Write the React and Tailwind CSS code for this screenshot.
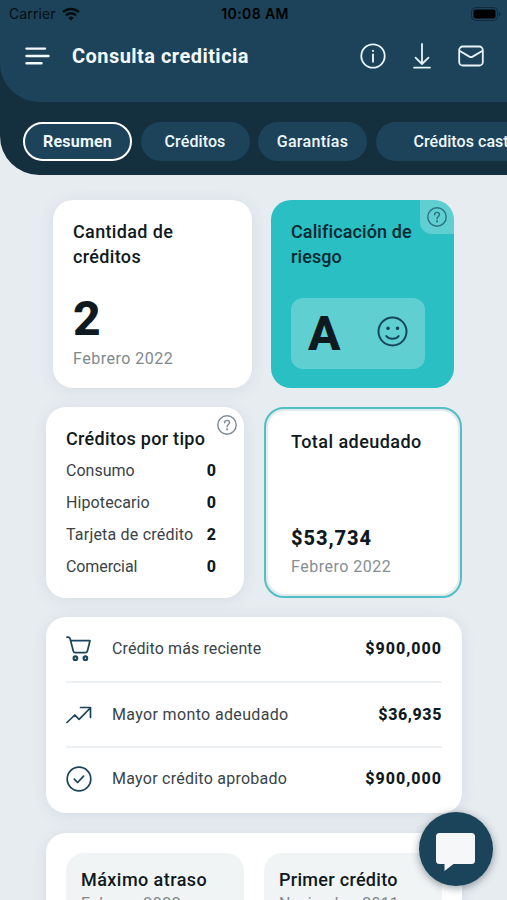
import React from 'react';

const types = [
  { label: 'Consumo', value: '0', tracking: 'tracking-[0px]' },
  { label: 'Hipotecario', value: '0', tracking: 'tracking-[0.1px]' },
  { label: 'Tarjeta de crédito', value: '2', tracking: 'tracking-[0.2px]' },
  { label: 'Comercial', value: '0', tracking: 'tracking-[-0.1px]' },
];

const CartIcon = () => (
  <svg width="26" height="26" viewBox="0 0 26 26" fill="none" stroke="#1b4359" strokeWidth="1.7" strokeLinecap="round" strokeLinejoin="round">
    <path d="M1 1.2h1.2c1 0 1.600.6 1.900 1.500L7.300 15c.3 1.100.9 1.600 1.900 1.600h10.200c1 0 1.700-.5 2-1.600l2.600-10.300H4.800" />
    <circle cx="9.400" cy="22.200" r="1.800" strokeWidth="2.100" />
    <circle cx="19.400" cy="22.200" r="1.800" strokeWidth="2.100" />
  </svg>
);

const TrendIcon = () => (
  <svg width="26" height="18" viewBox="0 0 26 18" fill="none" stroke="#1b4359" strokeWidth="1.7" strokeLinecap="round" strokeLinejoin="round">
    <path d="M1 16.500l7.800-7.500 4.300 4.300L24.300 2M14.500 1.500h10v10" />
  </svg>
);

const CheckIcon = () => (
  <svg width="26" height="26" viewBox="0 0 26 26" fill="none" stroke="#1b4359" strokeWidth="1.7" strokeLinecap="round" strokeLinejoin="round">
    <circle cx="13" cy="13" r="11.8" />
    <path d="M8.300 13.200l3.300 3.300 6-6.300" />
  </svg>
);

const records = [
  {
    icon: <CartIcon />,
    label: 'Crédito más reciente',
    value: '$900,000',
    row: 'h-16',
    tracking: 'tracking-[0.1px]',
    valueTracking: 'tracking-[1px]',
  },
  {
    icon: <TrendIcon />,
    label: 'Mayor monto adeudado',
    value: '$36,935',
    row: 'h-[65px] border-t-2 border-[#edf1f3]',
    tracking: 'tracking-[0.35px]',
    valueTracking: 'tracking-[0.6px]',
  },
  {
    icon: <CheckIcon />,
    label: 'Mayor crédito aprobado',
    value: '$900,000',
    row: 'h-[64px] border-t-2 border-[#edf1f3]',
    tracking: 'tracking-[0.25px]',
    valueTracking: 'tracking-[1px]',
  },
];

const HelpIcon = ({ color }) => (
  <svg width="20" height="20" viewBox="0 0 20 20" fill="none" stroke={color} strokeWidth="1.4" strokeLinecap="round">
    <circle cx="10" cy="10" r="9.2" />
    <path d="M7.600 7.800c0-1.400 1-2.400 2.400-2.400s2.500.9 2.500 2.200c0 1.800-2.400 2-2.400 3.900v.3" />
    <circle cx="10.1" cy="14.4" r=".4" fill={color} />
  </svg>
);

const StatusBar = () => (
  <div className="flex h-[27px] items-center justify-between pr-[6px] pl-[9px] font-[Inter,sans-serif] text-[14px] text-black">
    <div className="flex w-[120px] items-center gap-[6px] opacity-80">
      <span className="tracking-[0.1px]">Carrier</span>
      <svg width="18" height="14" viewBox="0 0 18 14" fill="none" stroke="#000" strokeWidth="2.5">
        <path d="M1 5.200a11.500 11.500 0 0 1 16 0M4 8.300a7.200 7.200 0 0 1 10 0" />
        <path d="M9 13.600L6.300 10.900a3.900 3.900 0 0 1 5.400 0z" fill="#000" stroke="none" />
      </svg>
    </div>
    <span className="font-semibold tracking-[0.4px]">10:08 AM</span>
    <div className="flex w-[120px] justify-end">
      <svg width="30" height="14" viewBox="0 0 30 14">
        <rect x=".5" y=".5" width="26" height="13" rx="4" fill="none" stroke="#000" strokeOpacity=".35" />
        <rect x="2.5" y="2.5" width="22" height="9" rx="2" fill="#000" />
        <path d="M28 5v4c1-.3 1.500-1 1.500-2S29 5.300 28 5z" fill="#000" fillOpacity=".4" />
      </svg>
    </div>
  </div>
);

const Header = () => (
  <header className="h-[175px] rounded-bl-[39px] bg-[#14303f]">
    <div className="h-[102px] rounded-bl-[39px] bg-[#1c435a]">
      <StatusBar />
      <div className="mt-px flex h-14 items-center pr-[23px] pl-[25px]">
        <svg width="26" height="20" viewBox="0 0 26 20" stroke="#f3f9fd" strokeWidth="2.4" strokeLinecap="round">
          <path d="M1.500 2.600h18.500M1.500 10h22M1.500 17.300h15" />
        </svg>
        <h1 className="ml-[21px] text-[20px] leading-7 font-bold tracking-[0.46px] text-[#f3f9fd]">Consulta crediticia</h1>
        <div className="ml-auto flex items-center">
          <svg width="26" height="26" viewBox="0 0 26 26" fill="none" stroke="#e8f4fa" strokeWidth="1.8" strokeLinecap="round">
            <circle cx="13" cy="13" r="11.7" />
            <path d="M13 11.500v7.200M13 7.600v.4" strokeWidth="1.9" />
          </svg>
          <svg className="ml-[26px]" width="20" height="26" viewBox="0 0 20 26" fill="none" stroke="#e8f4fa" strokeWidth="1.8" strokeLinecap="round" strokeLinejoin="round">
            <path d="M10 1v20M3.500 14.700L10 21l6.500-6.300M2 24.600h16" />
          </svg>
          <svg className="ml-[26px]" width="26" height="22" viewBox="0 0 26 22" fill="none" stroke="#e8f4fa" strokeWidth="1.8" strokeLinecap="round" strokeLinejoin="round">
            <rect x="1.2" y="1.5" width="23.6" height="19" rx="3.5" />
            <path d="M1.800 6l9.600 5.600c1.100.6 2.100.6 3.200 0L24.200 6" />
          </svg>
        </div>
      </div>
    </div>
    <nav className="mt-5 flex gap-[8.5px] overflow-hidden pl-[23px] text-[16px] font-medium text-[#eff8fc]">
      <span className="flex h-[39px] w-[109px] shrink-0 items-center justify-center rounded-full border-2 border-white bg-[#1c435a] font-bold tracking-[0.2px]">Resumen</span>
      <span className="flex h-[39px] w-[109px] shrink-0 items-center justify-center rounded-full bg-[#1c435a] tracking-[0.1px]">Créditos</span>
      <span className="flex h-[39px] w-[109px] shrink-0 items-center justify-center rounded-full bg-[#1c435a] tracking-[0.3px]">Garantías</span>
      <span className="flex h-[39px] w-[220px] shrink-0 items-center rounded-l-full bg-[#1c435a] pl-[38px] tracking-[0.05px] whitespace-nowrap">Créditos castigados</span>
    </nav>
  </header>
);

const App = () => {
  return (
    <div className="relative h-[900px] w-[507px] overflow-hidden bg-[#e7ecf1] font-[Roboto,sans-serif] text-[#0f1a20]">
      <Header />

      <main className="mt-[25px] ml-[46px] w-[416px]">
        <div className="flex justify-between pr-2 pl-[7px]">
          <section className="h-[188px] w-[199px] rounded-[20px] bg-white px-5 pt-[19px] shadow-[0_2px_16px_rgba(40,80,100,0.09)]">
            <h2 className="text-[18px] leading-[25px] font-medium tracking-[0.35px]">Cantidad de<br />créditos</h2>
            <p className="mt-[26px] text-[48px] leading-[48px] font-extrabold">2</p>
            <p className="mt-1 text-[16px] leading-6 tracking-[0.5px] text-[#7d898d]">Febrero 2022</p>
          </section>
          <section className="relative h-[188px] w-[183px] overflow-hidden rounded-[20px] bg-[#2abfc3] px-5 pt-[19px]">
            <span className="absolute top-0 right-0 flex h-[34px] w-[34px] items-center justify-center rounded-bl-[12px] bg-white/25">
              <HelpIcon color="#2b7183" />
            </span>
            <h2 className="text-[18px] leading-[25px] font-medium tracking-[0.1px] whitespace-nowrap text-[#082832]">Calificación de<br />riesgo</h2>
            <div className="mt-[29px] flex h-[71px] w-[134px] items-center justify-between rounded-[12px] bg-white/25 pr-[17px] pl-[17px]">
              <span className="text-[48px] leading-[48px] font-extrabold">A</span>
              <svg className="-mt-1" width="31" height="31" viewBox="0 0 31 31" fill="none" stroke="#17465a" strokeWidth="2" strokeLinecap="round">
                <circle cx="15.5" cy="15.5" r="14" />
                <path d="M9.300 20c2.800 3.700 9.600 3.700 12.400 0" />
                <circle cx="11" cy="12.2" r="1.2" fill="#17465a" strokeWidth="1.2" />
                <circle cx="20.5" cy="12.2" r="1.2" fill="#17465a" strokeWidth="1.2" />
              </svg>
            </div>
          </section>
        </div>

        <div className="mt-[19px] flex justify-between">
          <section className="relative h-[191px] w-[198px] rounded-[20px] bg-white pt-[19px] pr-7 pl-5 shadow-[0_2px_16px_rgba(40,80,100,0.09)]">
            <span className="absolute top-2 right-[7px]">
              <HelpIcon color="#7b8b97" />
            </span>
            <h2 className="text-[18px] leading-[25px] font-medium tracking-[0.3px] whitespace-nowrap">Créditos por tipo</h2>
            <ul className="mt-1 text-[16px]">
              {types.map((t) => (
                <li key={t.label} className="flex h-8 items-center justify-between whitespace-nowrap">
                  <span className={`text-[#3a4347] ${t.tracking}`}>{t.label}</span>
                  <span className="font-extrabold">{t.value}</span>
                </li>
              ))}
            </ul>
          </section>
          <section className="h-[191px] w-[198px] rounded-[20px] border-2 border-[#52bfc4] bg-[#e3ebef] p-[2px]">
            <div className="h-full rounded-[17px] bg-white pt-[18px] pl-[23px]">
              <h2 className="text-[18px] leading-[25px] font-medium tracking-[0.45px]">Total adeudado</h2>
              <p className="mt-[71px] text-[20px] leading-[26px] font-extrabold tracking-[0.95px]">$53,734</p>
              <p className="mt-1 text-[16px] leading-6 tracking-[0.5px] text-[#858e92]">Febrero 2022</p>
            </div>
          </section>
        </div>

        <section className="mt-[19px] h-[196px] rounded-[20px] bg-white px-5 shadow-[0_2px_16px_rgba(40,80,100,0.09)]">
          {records.map((r) => (
            <div key={r.label} className={`flex items-center text-[16px] ${r.row}`}>
              <span className="flex w-[46px] shrink-0">{r.icon}</span>
              <span className={`text-[#3a4347] ${r.tracking}`}>{r.label}</span>
              <span className={`ml-auto font-extrabold ${r.valueTracking}`}>{r.value}</span>
            </div>
          ))}
        </section>

        <section className="mt-5 flex h-[200px] justify-between rounded-[20px] bg-white p-5 shadow-[0_2px_16px_rgba(40,80,100,0.09)]">
          <div className="w-[178px] rounded-[18px] bg-[#f1f4f5] px-[15px] pt-[14px]">
            <h2 className="text-[18px] leading-[25px] font-medium tracking-[0.45px]">Máximo atraso</h2>
            <p className="text-[16px] leading-6 tracking-[0.5px] text-[#7d898d]">Febrero 2022</p>
          </div>
          <div className="w-[178px] rounded-[18px] bg-[#f1f4f5] px-[15px] pt-[14px]">
            <h2 className="text-[18px] leading-[25px] font-medium tracking-[0.3px]">Primer crédito</h2>
            <p className="text-[16px] leading-6 tracking-[0.2px] text-[#7d898d]">Noviembre 2011</p>
          </div>
        </section>
      </main>

      {/* Chat button */}
      <button className="absolute top-[811.5px] left-[418.5px] flex h-[74px] w-[74px] items-center justify-center rounded-full bg-[#1b4359] shadow-[0_2px_8px_rgba(20,40,50,0.45)]">
        <svg className="mt-[7px]" width="39" height="38" viewBox="0 0 39 38" fill="#f6f7f8">
          <path d="M3.500 0h32A3.500 3.500 0 0 1 39 3.500v24a3.500 3.500 0 0 1-3.500 3.500H17.500L8.500 38v-7h-5A3.500 3.500 0 0 1 0 27.500v-24A3.500 3.500 0 0 1 3.500 0z" />
        </svg>
      </button>
    </div>
  );
};

export default App;
